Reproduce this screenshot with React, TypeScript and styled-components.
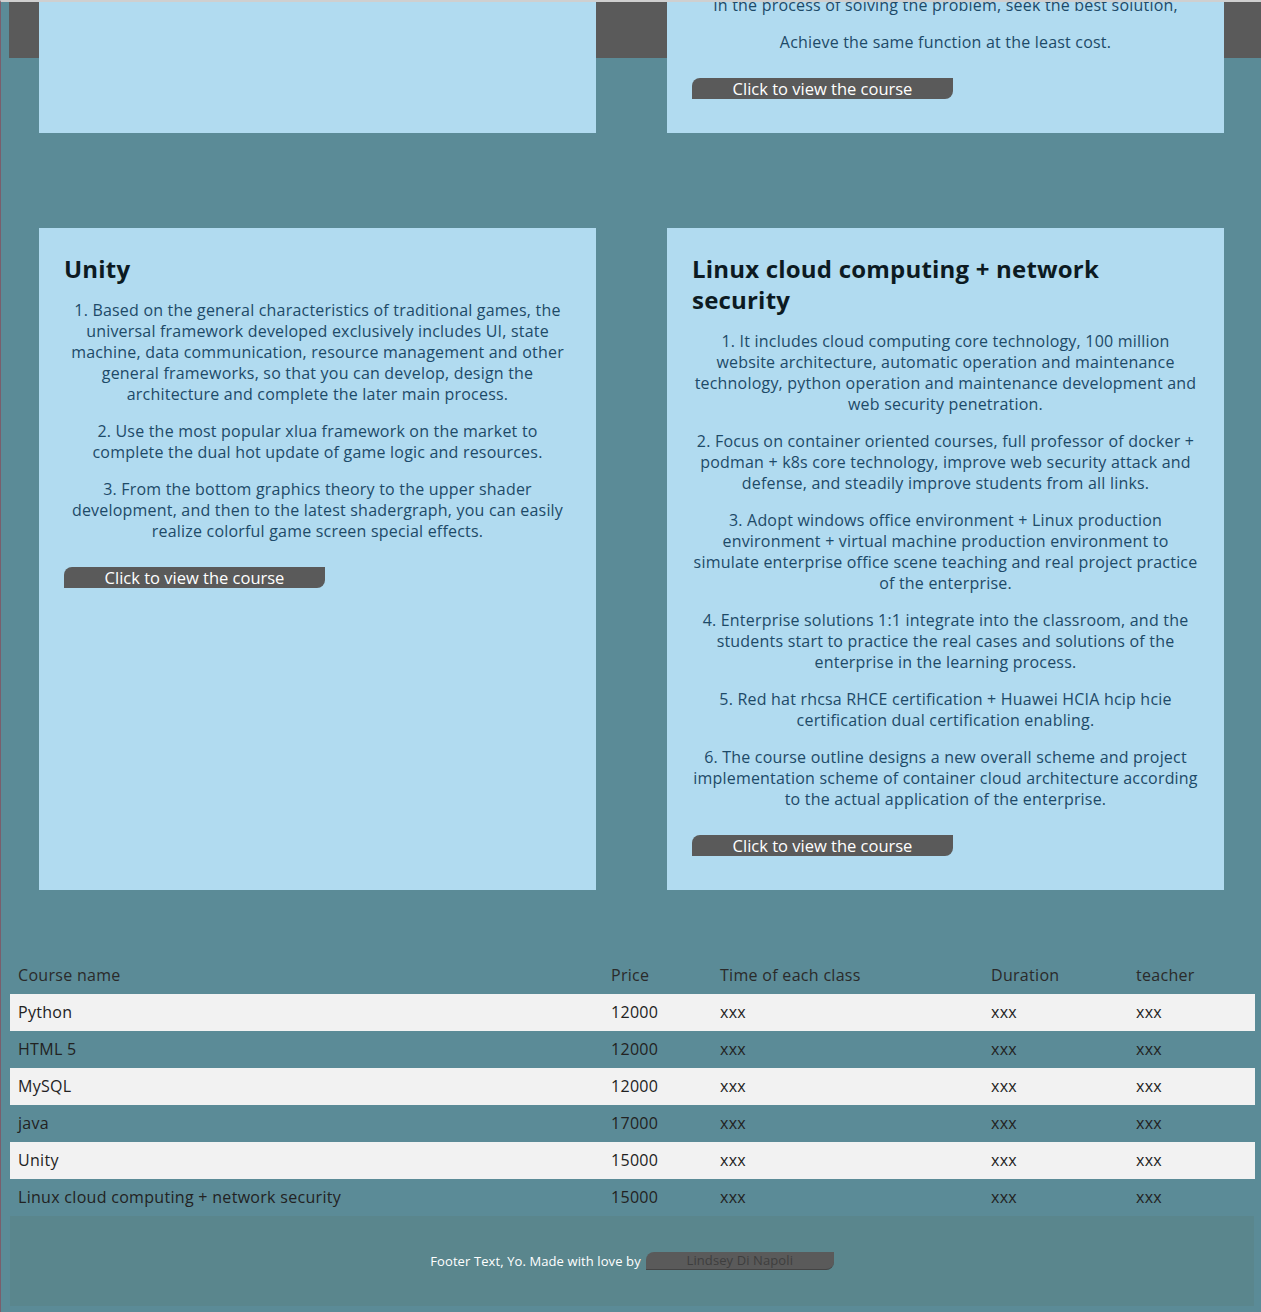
import React from "react";
import styled, { createGlobalStyle } from "styled-components";

const GlobalStyle = createGlobalStyle`
  html {
    background: #5b8b97;
  }
  html, body {
    margin: 0;
    padding: 0;
  }
  body {
    background: #5b8b97;
    border-top: 2px solid #cfcfcf;
    border-left: 1px solid #7a5e6c;
    min-height: 1310px;
    font-family: "Open Sans", "Noto Sans", sans-serif;
    color: #222;
  }
`;

const Page = styled.div`
  padding: 0 0 7px 8px;
`;

const CoursesArea = styled.section`
  display: flex;
  flex-direction: column;
  gap: 95px;
`;

const ClippedRow = styled.div`
  overflow: hidden;
  background: linear-gradient(to bottom, #5a5a5a 56px, transparent 56px);
`;

const CardGrid = styled.div`
  display: grid;
  grid-template-columns: 557px 557px;
  column-gap: 71px;
  padding: 0 37px 0 30px;
`;

const Card = styled.article<{ $clipped?: boolean }>`
  display: flex;
  flex-direction: column;
  align-items: flex-start;
  background: #b1dbf0;
  padding: ${(p) => (p.$clipped ? "0" : "25px")} 25px 34px 25px;
  min-height: ${(p) => (p.$clipped ? "131px" : "0")};
  box-sizing: border-box;
`;

const Title = styled.h2`
  margin: 0 0 16px;
  font-size: 24px;
  line-height: 31px;
  font-weight: 700;
  letter-spacing: 0.2px;
  color: #0c1a22;
`;

const Para = styled.p<{ $cut?: boolean }>`
  align-self: stretch;
  margin: ${(p) => (p.$cut ? "-7px" : "0")} 0 16px;
  font-size: 16px;
  line-height: 21px;
  letter-spacing: 0.2px;
  text-align: center;
  color: #1d4a68;
`;

const PillButton = styled.a`
  display: inline-block;
  margin-top: 9px;
  width: 261px;
  height: 21px;
  line-height: 21px;
  box-sizing: border-box;
  text-align: center;
  background: #5a5a5a;
  color: #ffffff;
  font-size: 16.5px;
  white-space: nowrap;
  border-radius: 8px 0 8px 0;
  text-decoration: none;
  cursor: pointer;
`;

const Table = styled.table`
  margin: 67px 7px 0 1px;
  width: 1245px;
  table-layout: fixed;
  border-collapse: collapse;
  font-size: 16px;
  line-height: 21px;
  letter-spacing: 0.3px;
  color: #222;
`;

const HeadCell = styled.th<{ $w: number }>`
  box-sizing: border-box;
  width: ${(p) => p.$w}px;
  padding: 8px;
  text-align: left;
  font-weight: 400;
  color: #2a2a2a;
`;

const Row = styled.tr<{ $light: boolean }>`
  background: ${(p) => (p.$light ? "#f2f2f2" : "transparent")};
`;

const Cell = styled.td`
  padding: 8px;
  text-align: left;
  white-space: nowrap;
`;

const Footer = styled.footer`
  margin: 0 7px 0 1px;
  height: 90px;
  background: #5a868d;
  display: flex;
  align-items: center;
  justify-content: center;
  gap: 5px;
  font-size: 13px;
  letter-spacing: 0.1px;
  color: #ffffff;
`;

const FooterLink = styled.a`
  display: inline-block;
  width: 188px;
  box-sizing: border-box;
  height: 18px;
  line-height: 17px;
  text-align: center;
  background: #5a5a5a;
  color: #3e3e3e;
  font-size: 13px;
  border-bottom: 1px solid #444;
  border-radius: 8px 0 8px 0;
  text-decoration: none;
`;

type Course = { title: string; paras: string[] };

const unity: Course = {
  title: "Unity",
  paras: [
    "1. Based on the general characteristics of traditional games, the universal framework developed exclusively includes UI, state machine, data communication, resource management and other general frameworks, so that you can develop, design the architecture and complete the later main process.",
    "2. Use the most popular xlua framework on the market to complete the dual hot update of game logic and resources.",
    "3. From the bottom graphics theory to the upper shader development, and then to the latest shadergraph, you can easily realize colorful game screen special effects.",
  ],
};

const linux: Course = {
  title: "Linux cloud computing + network security",
  paras: [
    "1. It includes cloud computing core technology, 100 million website architecture, automatic operation and maintenance technology, python operation and maintenance development and web security penetration.",
    "2. Focus on container oriented courses, full professor of docker + podman + k8s core technology, improve web security attack and defense, and steadily improve students from all links.",
    "3. Adopt windows office environment + Linux production environment + virtual machine production environment to simulate enterprise office scene teaching and real project practice of the enterprise.",
    "4. Enterprise solutions 1:1 integrate into the classroom, and the students start to practice the real cases and solutions of the enterprise in the learning process.",
    "5. Red hat rhcsa RHCE certification + Huawei HCIA hcip hcie certification dual certification enabling.",
    "6. The course outline designs a new overall scheme and project implementation scheme of container cloud architecture according to the actual application of the enterprise.",
  ],
};

const columns: [string, number][] = [
  ["Course name", 593],
  ["Price", 109],
  ["Time of each class", 271],
  ["Duration", 145],
  ["teacher", 127],
];

const rows: [string, string][] = [
  ["Python", "12000"],
  ["HTML 5", "12000"],
  ["MySQL", "12000"],
  ["java", "17000"],
  ["Unity", "15000"],
  ["Linux cloud computing + network security", "15000"],
];

function CourseCard({ course }: { course: Course }) {
  return (
    <Card>
      <Title>{course.title}</Title>
      {course.paras.map((t) => (
        <Para key={t}>{t}</Para>
      ))}
      <PillButton>Click to view the course</PillButton>
    </Card>
  );
}

export default function App() {
  return (
    <>
      <GlobalStyle />
      <Page>
        <CoursesArea>
          <ClippedRow>
            <CardGrid>
              <Card $clipped />
              <Card $clipped>
                <Para $cut>In the process of solving the problem, seek the best solution,</Para>
                <Para>Achieve the same function at the least cost.</Para>
                <PillButton>Click to view the course</PillButton>
              </Card>
            </CardGrid>
          </ClippedRow>
          <CardGrid>
            <CourseCard course={unity} />
            <CourseCard course={linux} />
          </CardGrid>
        </CoursesArea>
        <Table>
          <thead>
            <tr>
              {columns.map(([name, w]) => (
                <HeadCell key={name} $w={w}>
                  {name}
                </HeadCell>
              ))}
            </tr>
          </thead>
          <tbody>
            {rows.map(([name, price], i) => (
              <Row key={name} $light={i % 2 === 0}>
                <Cell>{name}</Cell>
                <Cell>{price}</Cell>
                <Cell>xxx</Cell>
                <Cell>xxx</Cell>
                <Cell>xxx</Cell>
              </Row>
            ))}
          </tbody>
        </Table>
        <Footer>
          <span>Footer Text, Yo. Made with love by</span>
          <FooterLink>Lindsey Di Napoli</FooterLink>
        </Footer>
      </Page>
    </>
  );
}
